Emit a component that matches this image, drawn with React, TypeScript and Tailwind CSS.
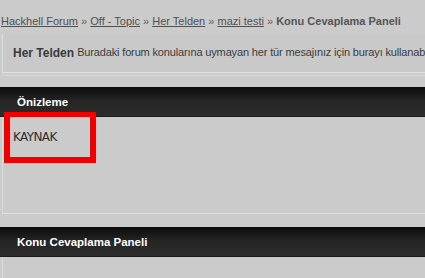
import React from 'react';

const crumbs = ['Hackhell Forum', 'Off - Topic', 'Her Telden', 'mazi testi'];

function DarkBar({ title }: { title: string }) {
  return (
    <div className="h-[30px] flex items-center pl-[17px] pt-[3px] bg-gradient-to-b from-[#0c0c0c] via-[#262626] to-[#2c2c2c] border-b border-[#1a1a1a]">
      <span className="text-white font-bold text-[11.5px]">{title}</span>
    </div>
  );
}

export default function App() {
  return (
    <div className="relative w-[425px] h-[278px] overflow-hidden bg-[#cbcbcb] [font-family:'Liberation_Sans',Arial,sans-serif] text-[#3a3a3a]">
      {/* breadcrumb */}
      <div className="pt-[13px] pl-[1px] text-[11px] leading-[16px] whitespace-nowrap text-[#505050]">
        {crumbs.map((c) => (
          <React.Fragment key={c}>
            <a className="underline underline-offset-1">{c}</a>
            <span className="text-[#606060]"> » </span>
          </React.Fragment>
        ))}
        <b className="text-[#555]">Konu Cevaplama Paneli</b>
      </div>

      {/* forum description */}
      <div className="mt-[4px] ml-[2px] border-l border-[#dedede] border-b border-b-[#e2e2e2] bg-[#c9c9c9] h-[40px] flex items-center pl-[10px] whitespace-nowrap overflow-hidden">
        <b className="text-[12px] text-[#3a3a3a] mr-[3px]">Her Telden</b>
        <span className="text-[11px] tracking-[-0.15px] text-[#3c3c3c]">
          Buradaki forum konularına uymayan her tür mesajınız için burayı kullanabilirsiniz.
        </span>
      </div>
      <div className="ml-[2px] mt-[2px] border-b border-[#d8d8d8]" />

      <div className="mt-[11px]">
        <DarkBar title="Önizleme" />
        <div className="ml-[2px] h-[97px] border-l border-[#dadada] border-b border-b-[#e0e0e0] pl-[10px] pt-[11px] leading-[16px]">
          <span className="text-[12px] text-[#2e2e2e] [font-family:Verdana,'DejaVu_Sans',sans-serif] tracking-[-0.6px]">KAYNAK</span>
        </div>
      </div>

      <div className="mt-[13px]">
        <DarkBar title="Konu Cevaplama Paneli" />
        <div className="ml-[2px] h-[30px] border-l border-[#dadada]" />
      </div>

      {/* red annotation frame */}
      <div className="absolute left-[4px] top-[112px] w-[92px] h-[51px] border-[6px] border-t-[5px] border-[#f00000]" />
    </div>
  );
}
